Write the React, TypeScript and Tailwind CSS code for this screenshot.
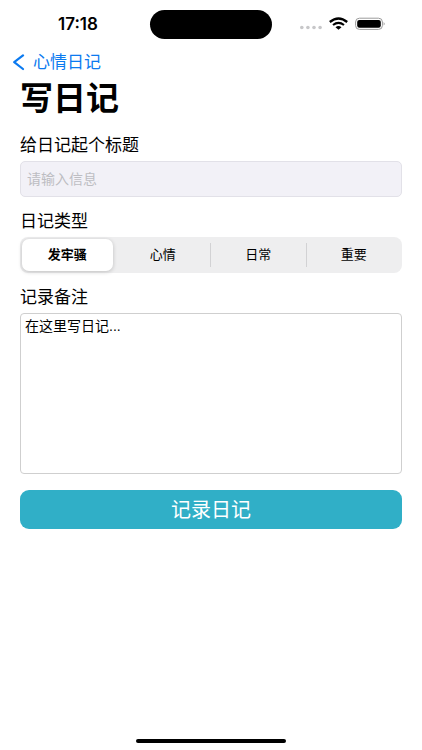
import { useState } from "react";
import clsx from "clsx";

const DIARY_TYPES = ["发牢骚", "心情", "日常", "重要"];

function StatusBar() {
	return (
		<div className="grid h-12 grid-cols-[1fr_122px_1fr] items-center">
			<span className="pl-[58px] font-['Inter','Liberation_Sans',sans-serif] text-[17px] leading-5 font-semibold">17:18</span>
			<div className="h-[29px] rounded-full bg-black" />
			<div className="flex items-center justify-end gap-[7px] pr-9">
				<svg width="22" height="14" viewBox="0 0 22 14" fill="#c7c7c9" aria-hidden="true">
					<circle cx="1.8" cy="10.5" r="1.8" />
					<circle cx="7.9" cy="10.5" r="1.8" />
					<circle cx="14" cy="10.5" r="1.8" />
					<circle cx="20.1" cy="10.5" r="1.8" />
				</svg>
				<svg width="19" height="14" viewBox="0 0 19 14" aria-hidden="true">
					<path d="M0.8 5Q9.5 -2 18.2 5" fill="none" stroke="#000" strokeWidth="2.3" />
					<path d="M4 8Q9.5 3.6 15 8" fill="none" stroke="#000" strokeWidth="2.1" />
					<path d="M9.5 12.8L6.5 10.2Q9.5 8 12.5 10.2Z" fill="#000" />
				</svg>
				<svg width="31" height="14" viewBox="0 0 31 14" aria-hidden="true">
					<rect x="0.6" y="1.2" width="26.8" height="11.2" rx="3.8" fill="none" stroke="#9b9b9b" />
					<rect x="2.2" y="2.9" width="23.6" height="7.8" rx="2.2" fill="#000" />
					<path d="M28.6 5Q30.8 6.8 28.6 8.6Z" fill="#9b9b9b" />
				</svg>
			</div>
		</div>
	);
}

interface TypePickerProps {
	value: string,
	onChange: (value: string) => void
}

function TypePicker({ value, onChange }: TypePickerProps) {

	const selected = DIARY_TYPES.indexOf(value);

	return (
		<fieldset>
			<legend className="mb-[3px] text-[17px] leading-6">日记类型</legend>
			<div className="grid h-9 grid-cols-4 rounded-lg bg-[#eeeeef]">
				{
					DIARY_TYPES.map((type, i) => (
						<label
							key={type}
							className={clsx(
								"flex cursor-pointer items-center py-[6px] text-[13px] leading-5",
								value === type && "font-bold"
							)}
						>
							<input type="radio" name="type" value={type} checked={value === type} onChange={() => onChange(type)} className="sr-only" />
							{
								value === type ?
									<span className="-my-1 mr-[3px] ml-[2px] flex h-8 flex-1 items-center justify-center rounded-[7px] bg-white shadow-[0_1px_4px_rgba(0,0,0,0.2)]">{type}</span> :
									<span className={clsx("flex h-full flex-1 items-center justify-center border-r", i === DIARY_TYPES.length - 1 || i + 1 === selected ? "border-transparent" : "border-[#d2d2d4]")}>{type}</span>
							}
						</label>
					))
				}
			</div>
		</fieldset>
	);
}

export default function App() {

	const [title, setTitle] = useState("");
	const [type, setType] = useState(DIARY_TYPES[0]);
	const [note, setNote] = useState("在这里写日记...");

	return (
		<div className="flex min-h-screen flex-col bg-white font-['Liberation_Sans','Noto_Sans_CJK_SC',sans-serif] text-black">
			<StatusBar />

			<nav className="flex h-[30px] items-center px-3">
				<a href="#" className="flex items-center gap-2 text-[17px] leading-6 text-[#0b7af0]">
					<svg width="13" height="18" viewBox="0 0 13 18" fill="none" stroke="currentColor" strokeWidth="2.2" strokeLinecap="round" strokeLinejoin="round" aria-hidden="true">
						<path d="M11 1.4L2.2 8.2L11 15" />
					</svg>
					心情日记
				</a>
			</nav>

			<main className="flex flex-1 flex-col px-5">
				<h1 className="text-[33px] leading-[42px] font-bold">写日记</h1>

				<form className="mt-[14px] flex flex-col gap-[13px]" onSubmit={(e) => e.preventDefault()}>
					<div className="flex flex-col gap-[3px]">
						<label htmlFor="title" className="text-[17px] leading-6">给日记起个标题</label>
						<input
							id="title"
							value={title}
							onChange={(e) => setTitle(e.target.value)}
							placeholder="请输入信息"
							className="h-9 w-full rounded-[5px] border border-[#e2e1e8] bg-[#f2f1f7] px-[6px] text-[14px] placeholder:text-[#bdbdc2]"
						/>
					</div>

					<TypePicker value={type} onChange={setType} />

					<div className="flex flex-col gap-[3px]">
						<label htmlFor="note" className="text-[17px] leading-6">记录备注</label>
						<textarea
							id="note"
							value={note}
							onChange={(e) => setNote(e.target.value)}
							className="h-[161px] w-full resize-none rounded-[4px] border border-[#cfcfcf] px-1 py-[2px] text-[14px] leading-5"
						/>
					</div>

					<button type="submit" className="mt-[3px] h-[39px] rounded-[9px] bg-[#30afc7] text-[20px] leading-6 text-white">记录日记</button>
				</form>
			</main>

			<div className="mx-auto mb-[7px] h-1 w-[150px] rounded-full bg-black" />
		</div>
	);
}
